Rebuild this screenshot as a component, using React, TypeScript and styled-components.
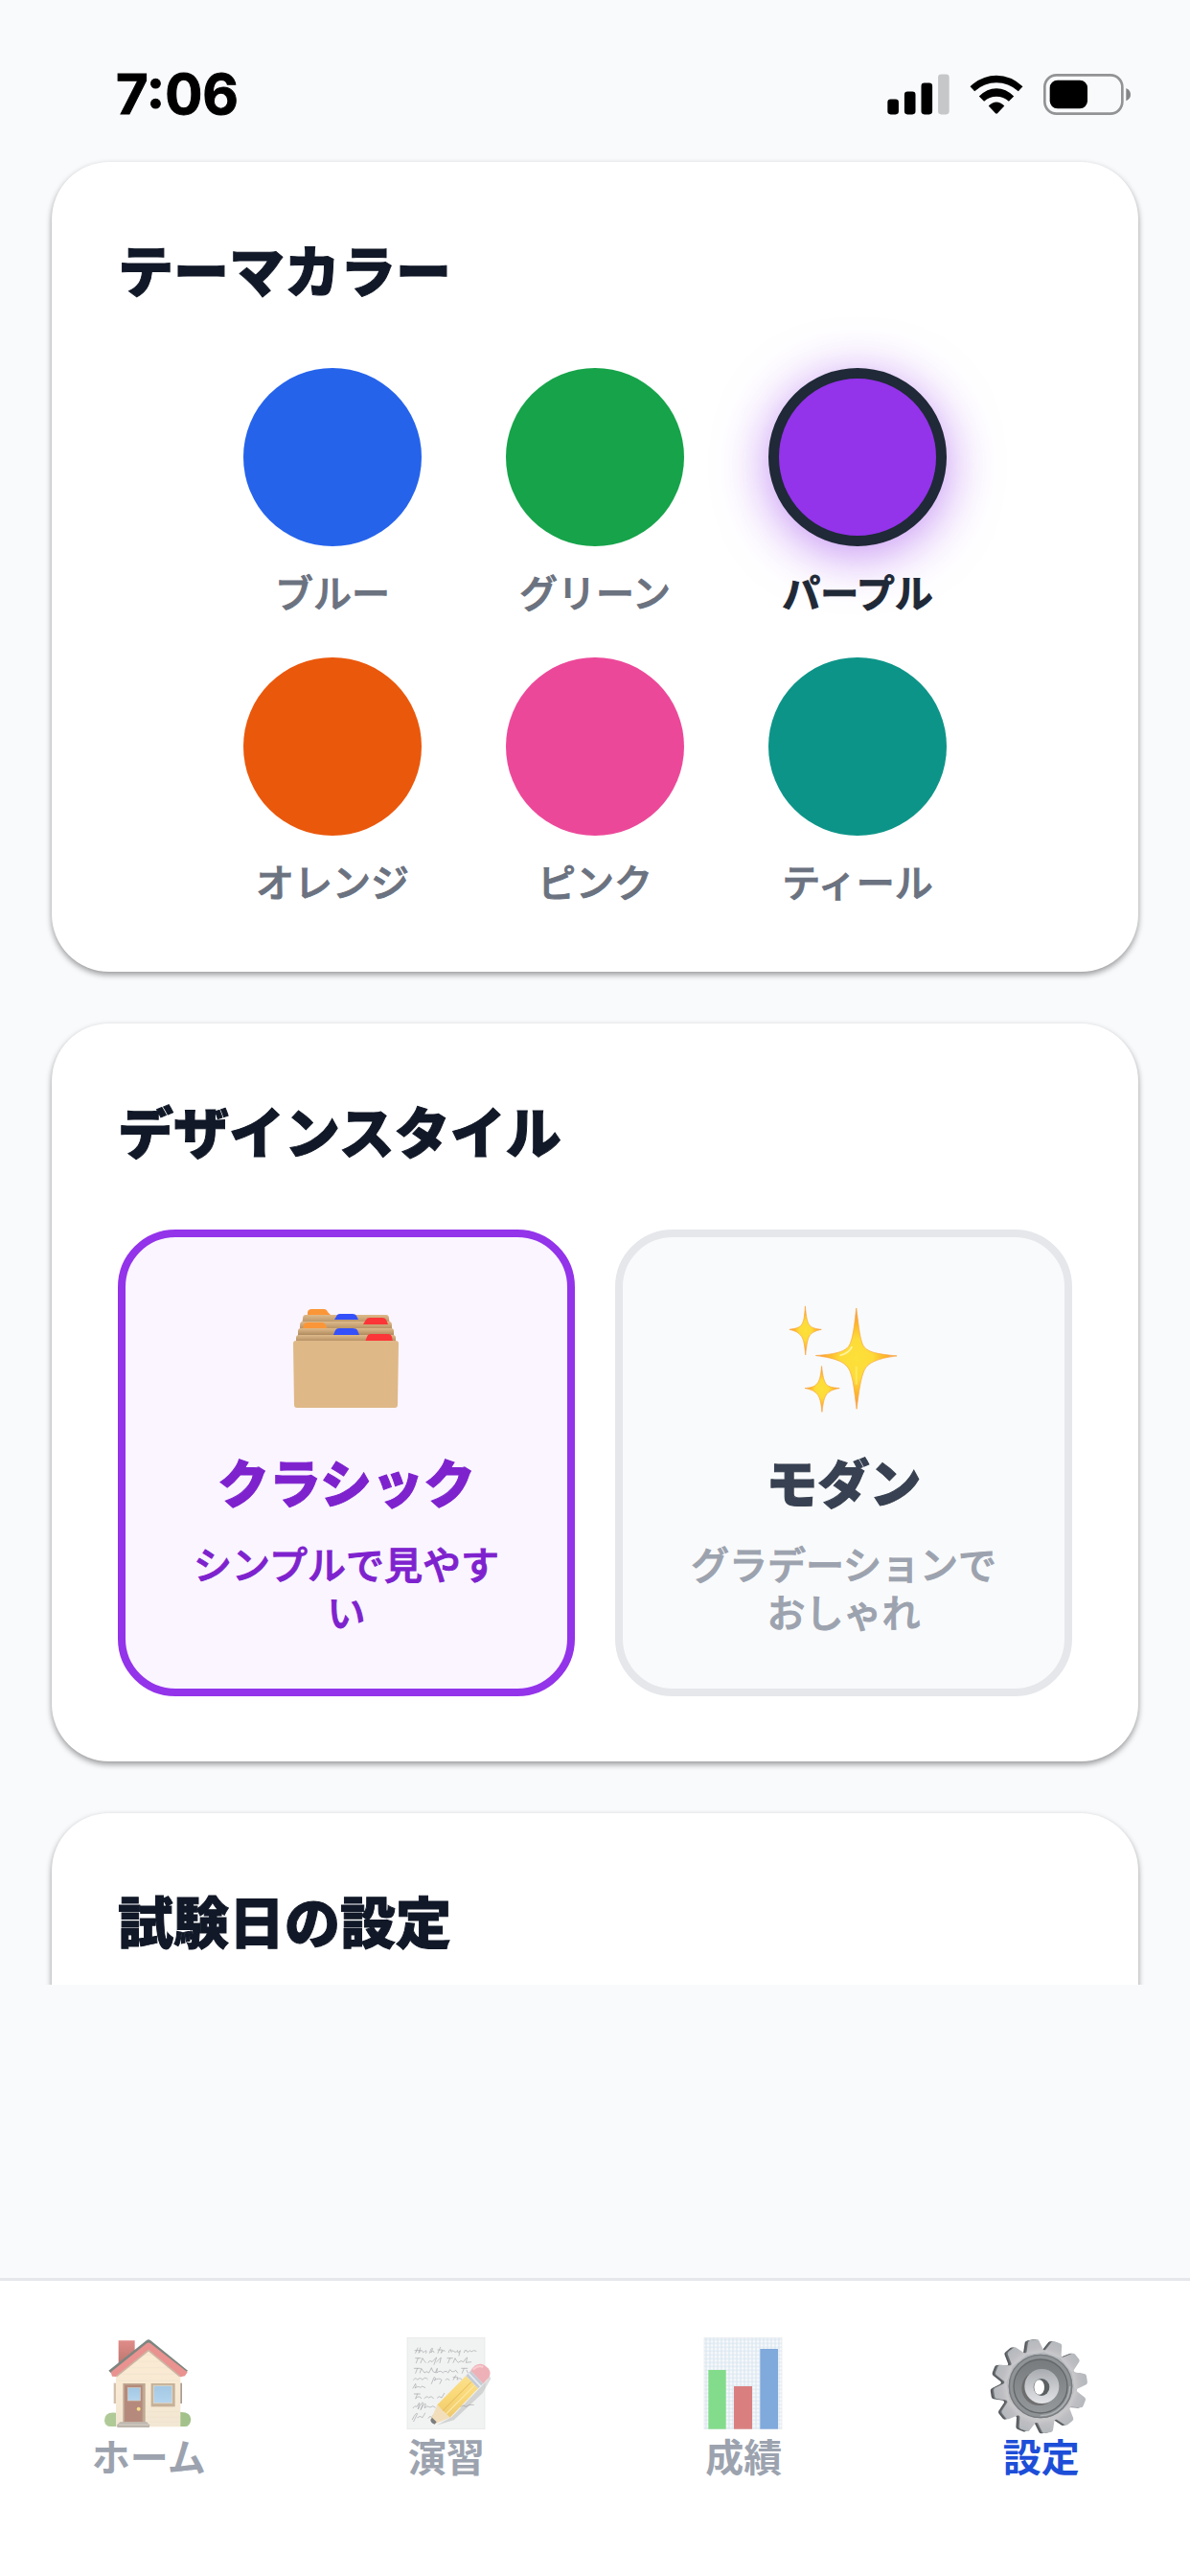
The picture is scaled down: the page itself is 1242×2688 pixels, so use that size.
import { useState } from 'react';
import styled, { createGlobalStyle, css } from 'styled-components';

const themeColors = [
  { id: 'blue', label: 'ブルー', color: '#2563eb' },
  { id: 'green', label: 'グリーン', color: '#16a34a' },
  { id: 'purple', label: 'パープル', color: '#9333ea' },
  { id: 'orange', label: 'オレンジ', color: '#ea580c' },
  { id: 'pink', label: 'ピンク', color: '#ec4899' },
  { id: 'teal', label: 'ティール', color: '#0d9488' },
];

const designStyles = [
  {
    id: 'classic',
    label: 'クラシック',
    description: 'シンプルで見やすい',
    Icon: FolderIcon,
  },
  {
    id: 'modern',
    label: 'モダン',
    description: 'グラデーションでおしゃれ',
    Icon: SparklesIcon,
  },
];

const tabs = [
  { id: 'home', label: 'ホーム', Icon: HomeIcon },
  { id: 'practice', label: '演習', Icon: MemoIcon },
  { id: 'results', label: '成績', Icon: ChartIcon },
  { id: 'settings', label: '設定', Icon: GearIcon },
];

function App() {
  const [themeColor, setThemeColor] = useState('purple');
  const [designStyle, setDesignStyle] = useState('classic');
  const [activeTab, setActiveTab] = useState('settings');

  return (
    <Screen>
      <GlobalStyle />
      <StatusBar>
        <Clock>7:06</Clock>
        <StatusIcons>
          <SignalIcon />
          <WifiIcon />
          <BatteryIcon />
        </StatusIcons>
      </StatusBar>

      <Content>
        <Card>
          <CardTitle>テーマカラー</CardTitle>
          <SwatchGrid>
            {themeColors.map(({ id, label, color }) => (
              <SwatchButton
                key={id}
                type="button"
                aria-pressed={id === themeColor}
                onClick={() => setThemeColor(id)}
              >
                <Swatch $color={color} $selected={id === themeColor} />
                <SwatchLabel $selected={id === themeColor}>{label}</SwatchLabel>
              </SwatchButton>
            ))}
          </SwatchGrid>
        </Card>

        <Card>
          <CardTitle>デザインスタイル</CardTitle>
          <StyleGrid>
            {designStyles.map(({ id, label, description, Icon }) => (
              <StyleButton
                key={id}
                type="button"
                aria-pressed={id === designStyle}
                $selected={id === designStyle}
                onClick={() => setDesignStyle(id)}
              >
                <Icon />
                <StyleName $selected={id === designStyle}>{label}</StyleName>
                <StyleDescription $selected={id === designStyle}>
                  {description}
                </StyleDescription>
              </StyleButton>
            ))}
          </StyleGrid>
        </Card>

        <Card>
          <CardTitle>試験日の設定</CardTitle>
        </Card>
      </Content>

      <BannerSlot />

      <TabBar>
        {tabs.map(({ id, label, Icon }) => (
          <TabLink
            key={id}
            href={`#${id}`}
            $active={id === activeTab}
            onClick={() => setActiveTab(id)}
          >
            <Icon />
            {label}
          </TabLink>
        ))}
      </TabBar>
    </Screen>
  );
}

function SignalIcon() {
  return (
    <svg width="65" height="43" viewBox="200 78 196 128" aria-hidden="true">
      <rect x="201" y="157" width="35" height="48" rx="10" />
      <rect x="254" y="133" width="35" height="72" rx="10" />
      <rect x="307" y="106" width="35" height="99" rx="10" />
      <rect x="360" y="79" width="35" height="126" rx="10" fill="#c6c7c8" />
    </svg>
  );
}

function WifiIcon() {
  return (
    <svg width="56" height="41" viewBox="458 80 168 124" aria-hidden="true">
      <path d="M459 117 Q496 82 542 82 Q588 82 625 117 L611 132 Q580 105 542 105 Q504 105 473 132 Z" />
      <path d="M487 148 Q512 123 542 123 Q572 123 597 148 L581 164 Q564 149 542 149 Q520 149 503 164 Z" />
      <path d="M517 178 Q542 154 567 178 L545 202 Q542 204 539 202 Z" />
    </svg>
  );
}

function BatteryIcon() {
  return (
    <svg width="91" height="43" viewBox="688 78 273 129" aria-hidden="true">
      <rect
        x="692"
        y="82"
        width="243"
        height="121"
        rx="37"
        fill="none"
        stroke="#929395"
        strokeWidth="8"
      />
      <rect x="708" y="98" width="118" height="89" rx="24" />
      <path d="M947 123 Q961 130 961 143 Q961 156 947 163 Z" fill="#848587" />
    </svg>
  );
}

function FolderIcon() {
  return (
    <svg width="148" height="148" viewBox="0 0 148 148" aria-hidden="true">
      <defs>
        <linearGradient id="folder" x1="0" y1="0" x2="0" y2="1">
          <stop offset="0" stopColor="#deb98a" />
          <stop offset="1" stopColor="#a98559" />
        </linearGradient>
      </defs>
      <path d="M33 28 V24 Q34 21 37 21 H50 Q53 21 54 24 L57 27 V30 Z" fill="#fb9638" />
      <path d="M28 31 Q28 27 31 27 H115 Q118 27 118 31 L119 38 H27 Z" fill="url(#folder)" />
      <path d="M61 32 L64 27 Q65 26 67 26 H80 Q83 26 84 28 L86 32 Z" fill="#3450fa" />
      <path d="M25 38 Q25 34 28 34 H118 Q121 34 121 38 V44 H25 Z" fill="url(#folder)" />
      <path d="M91 37 L94 32 Q95 30 98 30 H111 Q114 30 115 32 L117 37 Z" fill="#fb3538" />
      <path d="M28 42 L29 37 Q30 35 33 35 H48 Q51 35 52 38 L54 42 Z" fill="#fb9638" />
      <path d="M23 49 V44 Q23 41 26 41 H120 Q123 41 123 44 V49 Z" fill="url(#folder)" />
      <path d="M60 48 L62 43 Q63 41 66 41 H80 Q84 41 85 43 L87 48 Z" fill="#3450fa" />
      <path d="M21 56 V51 Q21 48 24 48 H122 Q125 48 125 51 V56 Z" fill="url(#folder)" />
      <path d="M93 55 L95 50 Q96 47 99 47 H117 Q120 47 121 50 L122 55 Z" fill="#fb3538" />
      <path
        d="M21 54 H125 Q128 54 128 57 L127 121 Q127 124 124 124 H22 Q19 124 19 121 L18 57 Q18 54 21 54 Z"
        fill="#dfb887"
      />
    </svg>
  );
}

function SparklesIcon() {
  return (
    <svg width="148" height="148" viewBox="543 250 430 430" aria-hidden="true">
      <defs>
        <radialGradient id="spark">
          <stop offset="0" stopColor="#fde03a" />
          <stop offset="0.4" stopColor="#fddb38" />
          <stop offset="0.7" stopColor="#fdb52a" />
          <stop offset="1" stopColor="#f8905a" />
        </radialGradient>
      </defs>
      <g fill="url(#spark)" stroke="#f9a53a" strokeWidth="2">
        <path d="M795 308 C801 350 804 390 813 415 C822 440 850 447 918 453 C858 461 832 473 820 495 C808 520 803 560 796 614 C789 560 786 525 776 500 C764 472 738 461 672 452 C742 447 768 438 777 414 C787 388 790 350 795 308 Z" />
        <path d="M640 302 C643 335 646 352 654 361 C662 369 672 371 689 373 C670 377 660 382 653 392 C647 402 644 420 641 450 C638 420 636 405 629 394 C621 383 611 377 592 373 C611 370 621 368 628 360 C636 350 638 333 640 302 Z" />
        <path d="M690 484 C693 514 697 530 704 539 C712 547 722 549 744 551 C722 555 712 561 705 569 C698 579 694 594 691 623 C688 594 685 581 678 571 C670 560 659 555 639 551 C659 549 669 546 676 537 C684 528 687 514 690 484 Z" />
      </g>
      <path d="M782 425 Q772 446 745 452" fill="none" stroke="#fff3a0" strokeWidth="5" />
      <path d="M795 485 V540" fill="none" stroke="#fff07a" strokeWidth="6" opacity="0.6" />
    </svg>
  );
}

function HomeIcon() {
  return (
    <svg width="110" height="102" viewBox="61 204 330 306" aria-hidden="true">
      <defs>
        <linearGradient id="chimney" x1="0" y1="0" x2="0" y2="1">
          <stop offset="0" stopColor="#e08c88" />
          <stop offset="1" stopColor="#b8736c" />
        </linearGradient>
        <linearGradient id="wall" x1="0" y1="0" x2="0" y2="1">
          <stop offset="0" stopColor="#fdebd3" />
          <stop offset="1" stopColor="#f2e7d3" />
        </linearGradient>
        <linearGradient id="pane" x1="0" y1="0" x2="0" y2="1">
          <stop offset="0" stopColor="#a3c8e4" />
          <stop offset="1" stopColor="#b4d5ee" />
        </linearGradient>
      </defs>
      <path d="M132 217 H183 V262 L132 300 Z" fill="url(#chimney)" />
      <path d="M124 443 Q88 438 88 468 Q90 486 108 486 H124 Z" fill="#afca97" />
      <path d="M322 441 Q358 438 359 464 Q356 486 340 486 H322 Z" fill="#a3c18a" />
      <rect x="117" y="350" width="9" height="64" fill="#d3c0ad" />
      <rect x="322" y="350" width="9" height="64" fill="#a89c93" />
      <path d="M124 322 L226 240 L326 322 V487 H124 Z" fill="url(#wall)" />
      <g stroke="#eee2cf" strokeWidth="2">
        <path d="M202 262 H250 M182 282 H270 M160 302 H294 M140 322 H312 M126 342 H324" />
        <path d="M216 440 H324 M216 456 H324 M228 472 H324" />
      </g>
      <path
        d="M101 311 L220 216 Q226 211 232 216 L349 311 L340 320 L226 228 L110 320 Z"
        fill="#7d8580"
      />
      <path
        d="M108 316 L220 226 Q226 221 232 226 L348 316 L340 328 L326 331 L226 248 L124 330 L112 329 Z"
        fill="#e9928f"
      />
      <path d="M126 329 L226 248 L324 329" fill="none" stroke="#cdb6a5" strokeWidth="5" />
      <rect x="146" y="351" width="70" height="122" fill="#bfa893" />
      <rect x="151" y="356" width="56" height="115" fill="#b58a7c" />
      <rect x="161" y="364" width="39" height="41" fill="url(#pane)" stroke="#d6cdbf" strokeWidth="2" />
      <circle cx="195" cy="431" r="6" fill="#f6dd8c" />
      <path d="M137 472 H221 L229 481 V489 H128 V481 Z" fill="#bdb6ad" />
      <path d="M133 480 H226" stroke="#d6d1c8" strokeWidth="3" />
      <rect x="234" y="351" width="75" height="73" fill="#c5b198" />
      <rect x="242" y="358" width="58" height="55" fill="url(#pane)" stroke="#ddd4c4" strokeWidth="3" />
    </svg>
  );
}

function MemoIcon() {
  return (
    <svg width="110" height="102" viewBox="62 84 330 306" aria-hidden="true">
      <defs>
        <linearGradient id="pencil" x1="0" y1="0" x2="0" y2="1">
          <stop offset="0" stopColor="#fbe08c" />
          <stop offset="0.5" stopColor="#f9d876" />
          <stop offset="1" stopColor="#efca6e" />
        </linearGradient>
      </defs>
      <rect x="104" y="88" width="243" height="286" fill="#f1f2f2" stroke="#e5e6e6" strokeWidth="2" />
      <g fill="none" stroke="#a4a6a7" strokeWidth="2" strokeLinecap="round" strokeLinejoin="round">
        <path d="M130 136 L137 120 M128 128 H146 M145 120 L140 136 Q150 124 152 130 Q152 138 160 130 Q166 124 163 136 M174 136 Q180 116 184 122 L178 135 Q186 124 188 134 M200 136 L208 118 M200 126 H214 L210 136 Q220 122 222 130 M234 134 Q234 124 242 126 Q238 138 248 128 Q254 138 262 128 Q262 142 270 128 L266 144 M282 134 Q284 124 290 128 Q292 138 300 128 Q304 136 312 128 L320 130" />
        <path d="M130 152 H146 M138 152 L132 167 M146 167 L152 152 Q156 160 162 166 M170 166 Q174 156 182 164 Q188 156 196 150 L188 172 M196 164 Q204 156 210 150 L206 167 M230 152 H246 M238 152 L232 167 M248 166 L254 152 Q258 162 264 166 Q272 156 280 164 Q286 152 292 150 L288 166 L304 164" />
        <path d="M126 184 H144 M136 184 L130 199 M144 198 L148 184 L158 198 Q164 190 172 198 L180 182 Q182 196 192 198 L198 184 L196 198 Q208 188 216 198 Q224 188 232 198 L238 188 Q246 200 256 190 L262 198 M274 184 H292 M282 184 L276 199 M290 190 L294 198" />
        <path d="M124 220 Q130 210 136 220 Q144 210 152 220 Q160 208 168 218 M180 232 L188 212 Q198 214 188 222 Q204 212 212 220 L206 232 M224 220 Q228 212 236 220 M248 220 L256 206 M248 212 H262 L260 220 Q268 210 276 220" />
        <path d="M122 246 L130 232 Q134 240 128 246 Q140 238 144 244 Q150 236 160 244" />
        <path d="M126 264 H144 M136 264 L130 279 Q142 266 148 278 M158 278 Q164 268 172 276 Q180 268 186 278 M198 276 Q204 268 212 276 L220 262" />
        <path d="M122 308 Q128 298 134 304 L142 292 L138 312 Q150 286 154 292 L146 314 Q158 290 162 296 L158 308 Q168 298 176 306 Q184 298 192 306 M270 304 Q280 296 288 304 Q296 296 312 298" />
        <path d="M120 344 Q132 320 136 326 L124 350 M136 338 Q144 330 152 338 L160 324 M170 340 Q176 330 180 338 L192 322 L180 348" />
      </g>
      <path d="M196 362 L244 336 L346 230 L362 208 L366 216 L340 262 L250 346 Z" fill="#777" opacity="0.25" />
      <path d="M197 299 L288 207 L326 247 L238 338 Z" fill="url(#pencil)" />
      <path d="M214 318 L305 226" stroke="#e5b958" strokeWidth="3" />
      <path d="M226 326 L316 236" stroke="#fbe7a4" strokeWidth="4" />
      <path d="M178 344 L199 297 L215 318 L238 338 L190 358 Z" fill="#f2deba" />
      <path d="M177 345 L182 338 L196 352 L190 359 Q178 356 177 345 Z" fill="#7c7d7e" />
      <path d="M288 207 L303 191 L342 232 L326 247 Z" fill="#c5ccd6" />
      <path d="M296 199 L334 240" stroke="#e9edf1" strokeWidth="5" />
      <path d="M303 191 Q320 163 344 173 Q372 190 360 212 L342 232 Z" fill="#eeb1b7" />
      <path d="M310 188 Q326 172 342 180" fill="none" stroke="#f8ccd0" strokeWidth="6" />
    </svg>
  );
}

function ChartIcon() {
  return (
    <svg width="110" height="102" viewBox="64 84 330 306" aria-hidden="true">
      <defs>
        <pattern id="grid" x="106" y="88" width="12" height="12" patternUnits="userSpaceOnUse">
          <rect width="12" height="12" fill="#f8f9fa" />
          <path d="M0 6 H12 M6 0 V12" stroke="#d6e6f1" strokeWidth="3" />
        </pattern>
      </defs>
      <rect x="106" y="88" width="243" height="286" fill="url(#grid)" stroke="#e6e8ea" strokeWidth="2" />
      <rect x="119" y="189" width="55" height="185" fill="#83dc8b" />
      <rect x="199" y="240" width="57" height="134" fill="#da7f80" />
      <rect x="281" y="123" width="56" height="251" fill="#80a9dc" />
    </svg>
  );
}

function GearIcon() {
  const teeth = Array.from({ length: 12 }, (_, i) => i * 30 - 9);

  return (
    <svg width="110" height="102" viewBox="95 84 330 306" aria-hidden="true">
      <defs>
        <linearGradient id="metal" x1="0" y1="0" x2="0" y2="1">
          <stop offset="0" stopColor="#b4b8bc" />
          <stop offset="0.6" stopColor="#bebec2" />
          <stop offset="1" stopColor="#cac9cc" />
        </linearGradient>
        <linearGradient id="dish" x1="0" y1="0" x2="0" y2="1">
          <stop offset="0" stopColor="#777b7e" />
          <stop offset="1" stopColor="#94989b" />
        </linearGradient>
        <linearGradient id="hub" x1="0" y1="0" x2="0" y2="1">
          <stop offset="0" stopColor="#a9acb0" />
          <stop offset="1" stopColor="#e2e3e7" />
        </linearGradient>
        <g id="cog">
          <circle cx="257" cy="240" r="115" />
          {teeth.map((angle) => (
            <path
              key={angle}
              d="M228 136 L240 98 Q242 93 248 93 H266 Q272 93 274 98 L286 136 Z"
              transform={`rotate(${angle} 257 240)`}
            />
          ))}
        </g>
      </defs>
      <use href="#cog" x="-10" y="1" fill="#54585c" />
      <use href="#cog" x="-5" y="0" fill="#6d7174" />
      <use href="#cog" fill="url(#metal)" />
      <circle cx="257" cy="240" r="100" fill="#8f9396" />
      <circle cx="257" cy="240" r="98" fill="none" stroke="#777b7e" strokeWidth="4" />
      <circle cx="257" cy="240" r="84" fill="url(#dish)" />
      <circle cx="257" cy="240" r="84" fill="none" stroke="#64686b" strokeWidth="4" />
      <path d="M349 240 A92 92 0 0 1 257 332" fill="none" stroke="#b0b3b6" strokeWidth="4" />
      <circle cx="252" cy="246" r="54" fill="#5b5857" opacity="0.6" />
      <circle cx="261" cy="240" r="54" fill="url(#hub)" />
      <ellipse cx="260" cy="243" rx="25" ry="27" fill="#5c6063" />
      <ellipse cx="253" cy="243" rx="16" ry="23" fill="#fff" />
    </svg>
  );
}

const GlobalStyle = createGlobalStyle`
  * {
    box-sizing: border-box;
  }

  body {
    margin: 0;
    background-color: #f9fafc;
    font-family: 'Noto Sans CJK JP', 'Noto Sans', sans-serif;
  }

  button {
    padding: 0;
    border: 0;
    background: none;
    font-family: inherit;
    cursor: pointer;
  }

  svg {
    display: block;
    flex-shrink: 0;
  }
`;

const Screen = styled.div`
  display: flex;
  flex-direction: column;
  height: 100vh;
  background-color: #f9fafc;
`;

const StatusBar = styled.header`
  display: flex;
  justify-content: space-between;
  align-items: center;
  padding: 76px 62px 22px 121px;
`;

const Clock = styled.time`
  color: #000;
  font-family: Inter, sans-serif;
  font-size: 58px;
  font-weight: 700;
  line-height: 44px;
  -webkit-text-stroke: 1px currentColor;
`;

const StatusIcons = styled.div`
  display: flex;
  align-items: center;
  gap: 21px;
`;

const Content = styled.main`
  flex: 1;
  min-height: 0;
  display: flex;
  flex-direction: column;
  gap: 54px;
  padding: 27px 54px 0;
  overflow: hidden;
`;

const Card = styled.section`
  flex-shrink: 0;
  padding: 68px 69px;
  border-radius: 60px;
  background-color: #fff;
  box-shadow: 0 3px 6px rgba(0, 0, 0, 0.4);
`;

const CardTitle = styled.h2`
  margin: 0 0 60px;
  color: #111827;
  font-size: 58px;
  font-weight: 900;
  line-height: 87px;
  -webkit-text-stroke: 1px currentColor;
`;

const SwatchGrid = styled.div`
  display: grid;
  grid-template-columns: repeat(3, 232px);
  justify-content: center;
  gap: 42px;
`;

const SwatchButton = styled.button`
  display: flex;
  flex-direction: column;
  align-items: center;
  gap: 22px;
  padding-bottom: 2px;
`;

const Swatch = styled.span<{ $color: string; $selected: boolean }>`
  width: 186px;
  height: 186px;
  border-radius: 50%;
  background-color: ${(props) => props.$color};
  ${(props) =>
    props.$selected &&
    css`
      border: 11px solid #1f2937;
      box-shadow: 0 9px 54px ${props.$color}90;
    `}
`;

const SwatchLabel = styled.span<{ $selected: boolean }>`
  color: ${(props) => (props.$selected ? '#1f2937' : '#6b7280')};
  font-size: 40px;
  font-weight: ${(props) => (props.$selected ? 700 : 500)};
  line-height: 50px;
  -webkit-text-stroke: 1px currentColor;
`;

const StyleGrid = styled.div`
  display: grid;
  grid-template-columns: 1fr 1fr;
  gap: 42px;
`;

const StyleButton = styled.button<{ $selected: boolean }>`
  display: flex;
  flex-direction: column;
  align-items: center;
  padding: 54px 69px 56px;
  border: 8px solid ${(props) => (props.$selected ? '#9333ea' : '#e5e7eb')};
  border-radius: 60px;
  background-color: ${(props) => (props.$selected ? '#faf5ff' : '#f9fafb')};
`;

const StyleName = styled.span<{ $selected: boolean }>`
  margin: 13px 0 20px;
  color: ${(props) => (props.$selected ? '#7e22ce' : '#374151')};
  font-size: 54px;
  font-weight: 900;
  line-height: 80px;
  -webkit-text-stroke: 1px currentColor;
`;

const StyleDescription = styled.span<{ $selected: boolean }>`
  color: ${(props) => (props.$selected ? '#7e22ce' : '#9ca3af')};
  font-size: 40px;
  font-weight: 500;
  line-height: 50px;
  -webkit-text-stroke: 1px currentColor;
`;

const BannerSlot = styled.div`
  height: 306px;
`;

const TabBar = styled.nav`
  display: grid;
  grid-template-columns: repeat(4, 1fr);
  height: 311px;
  padding-top: 58px;
  border-top: 3px solid #e5e7eb;
  background-color: #fff;
`;

const TabLink = styled.a<{ $active: boolean }>`
  display: flex;
  flex-direction: column;
  align-items: center;
  color: ${(props) => (props.$active ? '#1d4ed8' : '#9ca3af')};
  font-size: 40px;
  font-weight: 700;
  line-height: 44px;
  text-decoration: none;
`;

export default App;
